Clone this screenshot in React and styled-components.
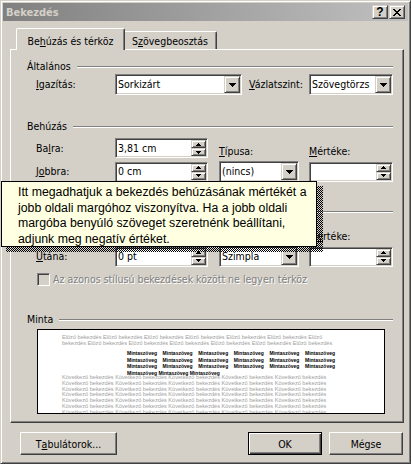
import React from 'react';
import styled, { createGlobalStyle, css } from 'styled-components';

const FACE = '#d4d0c8';
const UI_FONT = `"DejaVu Sans Condensed", "Liberation Sans", sans-serif`;

const Global = createGlobalStyle`
  * { box-sizing: border-box; }
  html, body { margin: 0; padding: 0; background: ${FACE}; }
  #root { width: 411px; height: 464px; }
`;

const raised = css`
  border: 1px solid;
  border-color: ${FACE} #404040 #404040 ${FACE};
  box-shadow: inset 1px 1px 0 #fff, inset -1px -1px 0 #808080;
`;

const sunken = css`
  border: 1px solid;
  border-color: #808080 #fff #fff #808080;
  box-shadow: inset 1px 1px 0 #404040, inset -1px -1px 0 ${FACE};
  padding: 1px;
`;

const Window = styled.div`
  position: relative;
  width: 411px;
  height: 464px;
  background: ${FACE};
  ${raised};
  padding: 2px;
  display: flex;
  flex-direction: column;
  font-family: ${UI_FONT};
  font-size: 10.5px;
  color: #000;
  overflow: hidden;
`;

const TitleBar = styled.div`
  flex: none;
  height: 18px;
  display: flex;
  align-items: center;
  background: linear-gradient(to right, #808080, #c0c0c0);
  padding: 0 3px 0 3px;
`;

const TitleText = styled.div`
  flex: 1;
  font-weight: bold;
  font-size: 11px;
  color: ${FACE};
  white-space: nowrap;
`;

const CaptionButton = styled.div`
  width: 16px;
  height: 14px;
  background: ${FACE};
  ${raised};
  display: flex;
  align-items: center;
  justify-content: center;
  margin-left: ${p => p.$gap || 0}px;
  font-family: "Liberation Sans", sans-serif;
  font-weight: bold;
  font-size: 12px;
  line-height: 12px;
`;

const Body = styled.div`
  flex: 1;
  min-height: 0;
  display: flex;
  flex-direction: column;
  padding: 7px 4px 6px 7px;
`;

const TabStrip = styled.div`
  flex: none;
  position: relative;
  z-index: 1;
  height: 21px;
  display: flex;
  align-items: flex-end;
  padding-left: 8px;
`;

const Tab = styled.div`
  width: ${p => p.$w}px;
  background: ${FACE};
  border-top: 1px solid #fff;
  border-left: 1px solid #fff;
  border-right: 1px solid #404040;
  border-radius: 2px 2px 0 0;
  box-shadow: inset -1px 0 0 #808080;
  text-align: center;
  white-space: nowrap;
  height: 18px;
  padding-top: 3px;
  line-height: 13px;
  ${p => p.$active && css`
    height: 22px;
    margin: 0 -2px -1px -2px;
    padding-top: 6px;
    position: relative;
    z-index: 2;
  `}
`;

const Panel = styled.div`
  flex: 1;
  min-height: 0;
  border: 1px solid;
  border-color: #fff #404040 #404040 #fff;
  box-shadow: inset -1px -1px 0 #808080;
  padding: 10px 10px 0 16px;
  display: flex;
  flex-direction: column;
`;

const GroupHeader = styled.div`
  flex: none;
  height: 13px;
  display: flex;
  align-items: center;
  gap: 6px;
  margin-top: ${p => p.$mt || 0}px;
  line-height: 13px;
  white-space: nowrap;
`;

const GroupGap = styled.div`
  flex: none;
  width: ${p => p.$w}px;
`;

const GroupLine = styled.div`
  flex: 1;
  border-top: 1px solid #808080;
  border-bottom: 1px solid #fff;
`;

const FlexRow = styled.div`
  display: flex;
  align-items: center;
  height: 21px;
  margin: ${p => p.$mt || 0}px 0 0 9px;
`;

const Label = styled.div`
  flex: none;
  width: ${p => (p.$w ? `${p.$w}px` : 'auto')};
  margin-left: ${p => p.$ml || 0}px;
  white-space: nowrap;
  line-height: 13px;
  min-height: 13px;
  align-self: ${p => (p.$bottom ? 'end' : 'center')};
`;

const FieldGrid = styled.div`
  display: grid;
  grid-template-columns: 79px 104px 90px 84px;
  row-gap: 3px;
  align-items: center;
  margin: 5px 0 0 9px;
`;

const Field = styled.div`
  flex: none;
  width: ${p => p.$w}px;
  height: ${p => p.$h}px;
  background: #fff;
  ${sunken};
  display: flex;
  align-items: center;
`;

const FieldText = styled.div`
  flex: 1;
  min-width: 0;
  overflow: hidden;
  white-space: nowrap;
  padding-left: 1px;
  line-height: 13px;
`;

const SpinCol = styled.div`
  flex: none;
  width: 15px;
  height: 100%;
  display: flex;
  flex-direction: column;
`;

const SpinBtn = styled.div`
  flex: 1;
  background: ${FACE};
  ${raised};
  display: flex;
  align-items: center;
  justify-content: center;
`;

const DropBtn = styled.div`
  flex: none;
  width: 16px;
  height: 100%;
  background: ${FACE};
  ${raised};
  display: flex;
  align-items: center;
  justify-content: center;
`;

const CheckRow = styled.div`
  display: flex;
  align-items: center;
  gap: 3px;
  height: 13px;
  margin: 6px 0 0 10px;
`;

const CheckBox = styled.div`
  flex: none;
  width: 13px;
  height: 13px;
  background: ${FACE};
  ${sunken};
`;

const Disabled = styled.span`
  color: #808080;
  text-shadow: 1px 1px 0 #fff;
  white-space: nowrap;
  line-height: 13px;
`;

const Preview = styled.div`
  flex: none;
  width: 348px;
  height: 85px;
  margin: 3px 0 0 10px;
  background: #fff;
  border: 1px solid #000;
  overflow: hidden;
  padding: 4px 0 0 24px;
  font-family: "Liberation Sans", Arial, sans-serif;
`;

const GrayLine = styled.div`
  white-space: nowrap;
  font-size: 5.6px;
  line-height: ${p => p.$lh || 6}px;
  height: ${p => p.$lh || 6}px;
  color: #a0a0a0;
`;

const SampleBlock = styled.div`
  width: 208px;
  margin: 4px 0 0 65px;
  color: #000;
  font-weight: bold;
  font-size: 5px;
`;

const SampleLine = styled.div`
  height: 6.5px;
  line-height: 6.5px;
  white-space: nowrap;
  text-align: justify;
  text-align-last: ${p => (p.$last ? 'left' : 'justify')};
`;

const Following = styled.div`
  margin-top: -1px;
`;

const Footer = styled.div`
  flex: none;
  display: flex;
  gap: 7px;
  height: 23px;
  margin-top: 9px;
  padding: 0 1px 0 10px;
`;

const Spacer = styled.div`
  flex: 1;
`;

const PushButton = styled.div`
  flex: none;
  width: ${p => p.$w}px;
  height: 23px;
  background: ${FACE};
  border: 1px solid;
  border-color: #fff #404040 #404040 #fff;
  box-shadow: inset -1px -1px 0 #808080;
  display: flex;
  align-items: center;
  justify-content: center;
  white-space: nowrap;
  ${p => p.$default && css`
    border-color: #000;
    box-shadow: inset 1px 1px 0 #fff, inset -1px -1px 0 #404040, inset -2px -2px 0 #808080;
  `}
`;

const Tooltip = styled.div`
  position: absolute;
  left: 0;
  top: 180px;
  width: 316px;
  height: 66px;
  z-index: 10;
  background: #ffffe1;
  border: 1px solid #000;
  padding: 3px 0 0 16px;
  font-family: "Liberation Sans", Arial, sans-serif;
  font-size: 12.3px;
  line-height: 15.5px;
  color: #000;

  &::before, &::after {
    content: "";
    position: absolute;
    background: repeating-conic-gradient(#000 0 25%, transparent 0 50%) 0 0 / 2px 2px;
  }
  &::before {
    top: 4px;
    right: -7px;
    width: 6px;
    bottom: -6px;
  }
  &::after {
    left: 4px;
    right: -1px;
    bottom: -6px;
    height: 5px;
  }
`;

const TipLine = styled.div`
  white-space: nowrap;
`;

const UpArrow = () => (
  <svg width="5" height="3" viewBox="0 0 5 3" shapeRendering="crispEdges">
    <path d="M2 0h1v1H2zM1 1h3v1H1zM0 2h5v1H0z" fill="#000" />
  </svg>
);

const DownArrow = () => (
  <svg width="5" height="3" viewBox="0 0 5 3" shapeRendering="crispEdges">
    <path d="M0 0h5v1H0zM1 1h3v1H1zM2 2h1v1H2z" fill="#000" />
  </svg>
);

const ComboArrow = () => (
  <svg width="7" height="4" viewBox="0 0 7 4" shapeRendering="crispEdges">
    <path d="M0 0h7v1H0zM1 1h5v1H1zM2 2h3v1H2zM3 3h1v1H3z" fill="#000" />
  </svg>
);

const CloseGlyph = () => (
  <svg width="8" height="7" viewBox="0 0 8 7" shapeRendering="crispEdges">
    <path
      d="M0 0h2v1H0zM6 0h2v1H6zM1 1h2v1H1zM5 1h2v1H5zM2 2h4v1H2zM3 3h2v1H3zM2 4h4v1H2zM1 5h2v1H1zM5 5h2v1H5zM0 6h2v1H0zM6 6h2v1H6z"
      fill="#000"
    />
  </svg>
);

const Spinner = ({ w, value }) => (
  <Field $w={w} $h={20}>
    <FieldText>{value}</FieldText>
    <SpinCol>
      <SpinBtn><UpArrow /></SpinBtn>
      <SpinBtn><DownArrow /></SpinBtn>
    </SpinCol>
  </Field>
);

const Combo = ({ w, value }) => (
  <Field $w={w} $h={21}>
    <FieldText>{value}</FieldText>
    <DropBtn><ComboArrow /></DropBtn>
  </Field>
);

const prev = 'Előző bekezdés ';
const next = 'Következő bekezdés ';
const sample = 'Mintaszöveg ';

export default function App() {
  return (
    <>
      <Global />
      <Window>
        <TitleBar>
          <TitleText>Bekezdés</TitleText>
          <CaptionButton>?</CaptionButton>
          <CaptionButton $gap={1}><CloseGlyph /></CaptionButton>
        </TitleBar>
        <Body>
          <TabStrip>
            <Tab $active $w={109}>Be<u>h</u>úzás és térköz</Tab>
            <Tab $w={94}>S<u>z</u>övegbeosztás</Tab>
          </TabStrip>
          <Panel>
            <GroupHeader>Általános<GroupLine /></GroupHeader>
            <FlexRow $mt={1}>
              <Label $w={79}><u>I</u>gazítás:</Label>
              <Combo w={127} value="Sorkizárt" />
              <Label $w={60} $ml={7}><u>V</u>ázlatszint:</Label>
              <Combo w={84} value="Szövegtörzs" />
            </FlexRow>

            <GroupHeader $mt={25}>Behúzás<GroupLine /></GroupHeader>
            <FieldGrid>
              <Label>Ba<u>l</u>ra:</Label>
              <Spinner w={93} value="3,81 cm" />
              <Label $bottom><u>T</u>ípusa:</Label>
              <Label $bottom><u>M</u>értéke:</Label>
              <Label>J<u>o</u>bbra:</Label>
              <Spinner w={93} value="0 cm" />
              <Combo w={80} value="(nincs)" />
              <Spinner w={84} value="" />
            </FieldGrid>

            <GroupHeader $mt={23}><GroupGap $w={37} /><GroupLine /></GroupHeader>
            <FieldGrid>
              <Label />
              <Spinner w={93} value="" />
              <Label $bottom />
              <Label $bottom>M<u>é</u>rtéke:</Label>
              <Label><u>U</u>tána:</Label>
              <Spinner w={93} value="0 pt" />
              <Combo w={80} value="Szimpla" />
              <Spinner w={84} value="" />
            </FieldGrid>
            <CheckRow>
              <CheckBox />
              <Disabled>Az azonos stílusú bekezdések között ne legyen térköz</Disabled>
            </CheckRow>

            <GroupHeader $mt={27}>Minta<GroupLine /></GroupHeader>
            <Preview>
              <GrayLine>{prev.repeat(6)}Előző</GrayLine>
              <GrayLine>{'bekezdés ' + prev.repeat(5) + 'Előző bekezdés'}</GrayLine>
              <SampleBlock>
                <SampleLine>{sample.repeat(6).trim()}</SampleLine>
                <SampleLine>{sample.repeat(6).trim()}</SampleLine>
                <SampleLine>{sample.repeat(6).trim()}</SampleLine>
                <SampleLine $last>{sample.repeat(3).trim()}</SampleLine>
              </SampleBlock>
              <Following>
                {Array.from({ length: 7 }).map((_, i) => (
                  <GrayLine key={i} $lh={5.8}>{next.repeat(5).trim()}</GrayLine>
                ))}
              </Following>
            </Preview>
          </Panel>
          <Footer>
            <PushButton $w={97}>T<u>a</u>bulátorok...</PushButton>
            <Spacer />
            <PushButton $w={74} $default>OK</PushButton>
            <PushButton $w={74}>Mégse</PushButton>
          </Footer>
        </Body>
        <Tooltip>
          <TipLine>Itt megadhatjuk a bekezdés behúzásának mértékét a</TipLine>
          <TipLine>jobb oldali margóhoz viszonyítva. Ha a jobb oldali</TipLine>
          <TipLine>margóba benyúló szöveget szeretnénk beállítani,</TipLine>
          <TipLine>adjunk meg negatív értéket.</TipLine>
        </Tooltip>
      </Window>
    </>
  );
}
